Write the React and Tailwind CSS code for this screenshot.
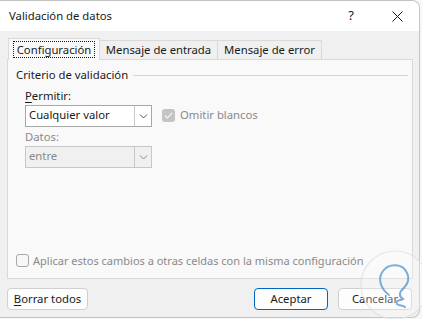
import React from 'react';

const FONT = { fontFamily: '"Noto Sans", "Open Sans", Arial, sans-serif' };

function Chevron({ color = '#555' }) {
  return (
    <svg width="9" height="6" viewBox="0 0 9 6">
      <path d="M1 1.5 L4.5 5 L8 1.5" fill="none" stroke={color} strokeWidth="1" />
    </svg>
  );
}

function Select({ value, disabled }) {
  return (
    <div
      className={`flex h-[22px] w-[127px] border ${
        disabled ? 'border-[#c8c8c8] bg-[#f0f0f0] text-[#8a8a8a]' : 'border-[#a8a8a8] bg-white text-[#1a1a1a]'
      }`}
    >
      <div className="flex flex-1 items-center pl-[3px] text-[11.3px]">{value}</div>
      <div className="flex w-[17px] items-center justify-center border-l border-[#c8c8c8]">
        <Chevron color={disabled ? '#8a8a8a' : '#555'} />
      </div>
    </div>
  );
}

function Button({ children, primary, className = '' }) {
  return (
    <div
      className={`flex h-[22px] items-center justify-center rounded-[4px] border text-[11.3px] text-[#1a1a1a] bg-[#fdfdfd] ${
        primary ? 'border-[#0067c0]' : 'border-[#d0d0d0]'
      } ${className}`}
    >
      {children}
    </div>
  );
}

export default function App() {
  return (
    <div className="relative h-[319px] w-[422px] overflow-hidden bg-[#f7f7f7]" style={FONT}>
      <div className="flex h-[318px] w-[420px] flex-col overflow-hidden rounded-r-[8px] border border-l-0 border-[#c4c4c4] bg-[#f0f0f0]">
        {/* Title bar */}
        <div className="flex h-[30px] shrink-0 items-center bg-white pl-[9px]">
          <span className="text-[11.3px] text-[#1a1a1a]">Validación de datos</span>
          <span className="ml-auto mr-[38px] text-[13px] text-[#1a1a1a]">?</span>
          <svg width="11" height="11" viewBox="0 0 11 11" className="mr-[16px]">
            <path d="M0.5 0.5 L10.5 10.5 M10.5 0.5 L0.5 10.5" stroke="#1a1a1a" strokeWidth="1" />
          </svg>
        </div>

        {/* Tabs */}
        <div className="flex h-[28px] shrink-0 items-end pl-[8px]">
          <div className="relative z-10 -mb-px flex h-[22px] w-[92px] items-center justify-center border border-b-0 border-[#d9d9d9] bg-[#f9f9f9]">
            <span className="border border-dotted border-[#1a1a1a] px-[3px] text-[11.3px] leading-[15px] text-[#1a1a1a]">
              Configuración
            </span>
          </div>
          <div className="flex h-[19px] w-[118px] items-center justify-center border border-b-0 border-l-0 border-[#d9d9d9] bg-[#f0f0f0] text-[11.3px] text-[#1a1a1a]">
            Mensaje de entrada
          </div>
          <div className="flex h-[19px] w-[104px] items-center justify-center border border-b-0 border-l-0 border-[#d9d9d9] bg-[#f0f0f0] text-[11.3px] text-[#1a1a1a]">
            Mensaje de error
          </div>
        </div>

        {/* Panel */}
        <div className="ml-[7px] flex h-[220px] w-[406px] shrink-0 flex-col border border-[#d9d9d9] bg-[#f9f9f9] pl-[8px] pt-[7px]">
          <div className="flex items-center gap-[5px]">
            <span className="text-[11.3px] text-[#1a1a1a]">Criterio de validación</span>
            <div className="mr-[4px] h-px flex-1 bg-[#d5d5d5]" />
          </div>

          <div className="ml-[9px] mt-[4px] text-[11.3px] text-[#1a1a1a]">
            <span className="underline underline-offset-2">P</span>ermitir:
          </div>
          <div className="ml-[9px] flex items-center">
            <Select value="Cualquier valor" />
            <div className="ml-[10px] flex items-center gap-[5px] text-[11.3px] text-[#8a8a8a]">
              <div className="flex h-[13px] w-[13px] items-center justify-center rounded-[3px] bg-[#c4c4c4]">
                <svg width="9" height="7" viewBox="0 0 9 7">
                  <path d="M1 3.5 L3.5 6 L8 1" fill="none" stroke="#f4f4f4" strokeWidth="1.2" />
                </svg>
              </div>
              Omitir blancos
            </div>
          </div>

          <div className="ml-[9px] mt-[2px] text-[11.3px] text-[#8a8a8a]">Datos:</div>
          <div className="ml-[9px]">
            <Select value="entre" disabled />
          </div>

          <div className="mt-auto mb-[9px] flex items-center gap-[4px] text-[11px] text-[#8a8a8a]">
            <div className="h-[13px] w-[13px] rounded-[3px] border border-[#a8a8a8] bg-[#f7f7f7]" />
            Aplicar estos cambios a otras celdas con la misma configuración
          </div>
        </div>

        {/* Buttons */}
        <div className="mt-[9px] flex items-center pl-[7px] pr-[7px]">
          <Button className="w-[81px]">
            <span>
              <span className="underline underline-offset-2">B</span>orrar todos
            </span>
          </Button>
          <Button primary className="ml-auto w-[74px]">Aceptar</Button>
          <Button className="ml-[10px] w-[74px]">Cancelar</Button>
        </div>
      </div>

      {/* watermark */}
      <svg width="72" height="72" viewBox="0 0 72 72" className="absolute left-[359px] top-[249px] opacity-80">
        <circle cx="36" cy="36" r="34" fill="#ffffff" fillOpacity="0.35" stroke="#e2e2e2" strokeWidth="1.2" />
        <path
          d="M30 46 C22 40 18 30 24 22 C30 14 44 14 48 24 C52 32 46 38 42 42 C40 45 41 48 44 50 C40 52 36 51 38 55 C40 57 44 56 46 58"
          fill="none"
          stroke="#5b9bd5"
          strokeWidth="2"
          strokeLinecap="round"
        />
      </svg>
    </div>
  );
}
